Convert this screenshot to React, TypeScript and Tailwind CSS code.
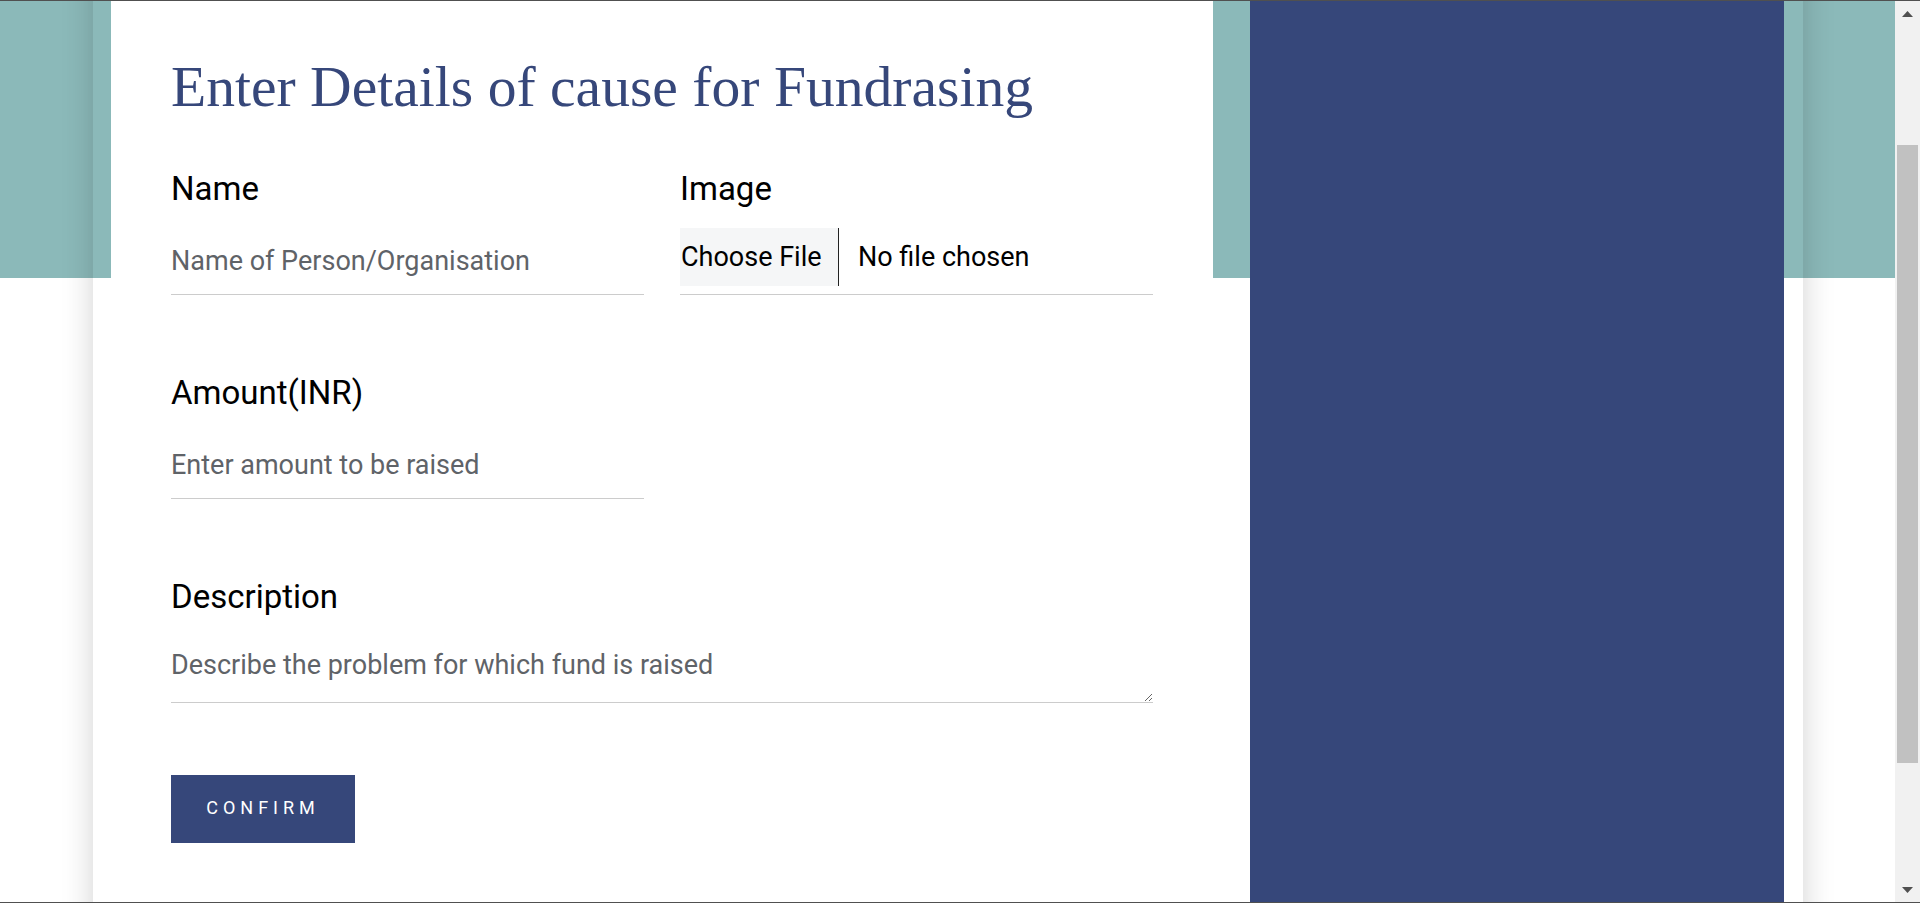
const labelCls = 'block text-[33px] leading-none font-normal text-black';
const lineInput =
  'block h-[67px] w-full border-b border-[#cccccc] bg-transparent text-[27px] leading-[normal] text-black outline-none placeholder:text-[#5f6368]';

const Field = ({ label, className, children }: { label: string; className?: string; children: React.ReactNode }) => (
  <div className={className}>
    <label className={labelCls}>{label}</label>
    <div className="mt-[23px]">{children}</div>
  </div>
);

const Scrollbar = () => (
  <div className="flex w-[25px] shrink-0 flex-col bg-[#f1f1f1] pt-[10px] pb-[9px]">
    <svg className="ml-[7px] h-[6px] w-[11px] shrink-0" viewBox="0 0 11 6">
      <path d="M5.5 0L11 6H0Z" fill="#505050" />
    </svg>
    <div className="mt-[128px] ml-[2px] h-[618px] w-[21px] shrink-0 bg-[#c1c1c1]" />
    <div className="flex-1" />
    <svg className="ml-[7px] h-[6px] w-[11px] shrink-0" viewBox="0 0 11 6">
      <path d="M0 0H11L5.5 6Z" fill="#505050" />
    </svg>
  </div>
);

export default function App() {
  return (
    <div className="flex h-[903px] w-full overflow-hidden border-y border-[#505050] bg-white font-['Roboto',sans-serif]">
      <main className="flex-1 overflow-hidden bg-[linear-gradient(to_bottom,#8bb9b9_277px,#ffffff_277px)]">
        {/* card, scrolled so its top sits above the viewport */}
        <div className="-mt-[60px] ml-[93px] flex h-[1021px] w-[1710px] pl-[18px] pr-[19px] shadow-[0_0_30px_rgba(0,0,0,0.18)]">
          <section className="w-[1102px] shrink-0 bg-white px-[60px] pt-[117px]">
            <h1 className="font-['Liberation_Serif',serif] text-[57.6px] leading-[57px] font-normal text-[#36477a]">
              Enter Details of cause for Fundrasing
            </h1>

            <form className="mt-[57px]" onSubmit={(e) => e.preventDefault()}>
              <div className="grid grid-cols-2 gap-x-[36px]">
                <Field label="Name">
                  <input type="text" placeholder="Name of Person/Organisation" className={lineInput} />
                </Field>
                <Field label="Image">
                  <div className="flex h-[67px] items-start border-b border-[#cccccc] text-[27px] leading-[normal] text-black">
                    <span className="flex h-[58px] w-[159px] items-center border-r border-[#222222] bg-[#f5f6f7] pl-px">
                      Choose File
                    </span>
                    <span className="ml-[19px] flex h-[58px] items-center">No file chosen</span>
                  </div>
                </Field>
              </div>

              <Field label="Amount(INR)" className="mt-[81px] w-[473px]">
                <input type="text" placeholder="Enter amount to be raised" className={lineInput} />
              </Field>

              <Field label="Description" className="mt-[81px]">
                <textarea
                  placeholder="Describe the problem for which fund is raised"
                  className="block h-[67px] w-full border-b border-[#cccccc] bg-transparent pt-[13px] text-[27px] leading-[normal] text-black outline-none placeholder:text-[#5f6368]"
                />
              </Field>

              <button
                type="submit"
                className="mt-[72px] flex h-[68px] w-[184px] items-center justify-center bg-[#36477a] pb-[3px] text-[18px] leading-[normal] tracking-[5px] text-white"
              >
                CONFIRM
              </button>
            </form>
          </section>

          <aside className="ml-[37px] w-[534px] shrink-0 bg-[#36477a]" />
        </div>
      </main>
      <Scrollbar />
    </div>
  );
}
